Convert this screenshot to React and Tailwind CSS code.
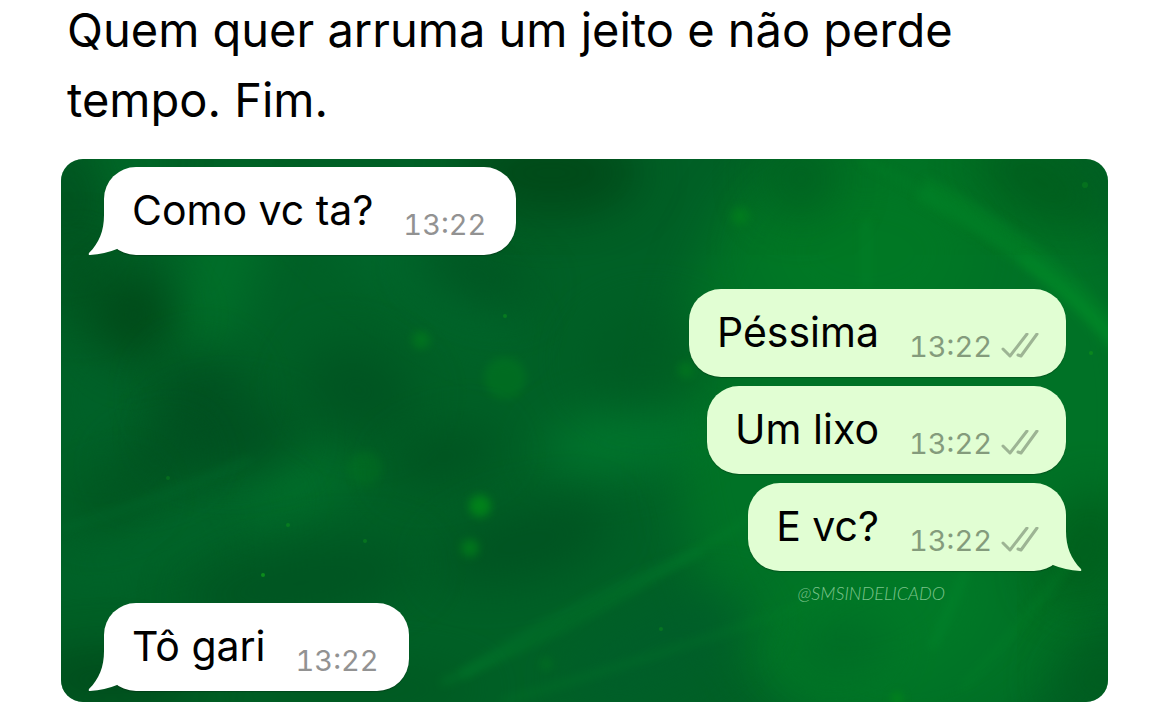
const messages = [
  { id: 1, text: 'Como vc ta?', time: '13:22', mine: false, tail: true },
  { id: 2, text: 'Péssima', time: '13:22', mine: true, tail: false },
  { id: 3, text: 'Um lixo', time: '13:22', mine: true, tail: false },
  { id: 4, text: 'E vc?', time: '13:22', mine: true, tail: true },
  { id: 5, text: 'Tô gari', time: '13:22', mine: false, tail: true },
];

// [cx, cy, rx, ry, rotation, color, opacity]
const clouds = [
  [850, 260, 240, 330, 0, '#007826', 0.75],
  [805, 94, 110, 80, 0, '#007e24', 0.5],
  [820, 461, 120, 70, -20, '#008028', 0.5],
  [159, 110, 36, 100, 20, '#00722a', 0.85],
  [66, 4, 40, 26, 0, '#00702a', 0.8],
  [234, 328, 60, 24, -25, '#00742c', 0.9],
  [561, 281, 80, 32, -10, '#00782e', 0.9],
  [350, 110, 130, 30, 35, '#006a2e', 0.7],
  [40, 240, 40, 60, 0, '#00622a', 0.7],
  [110, 378, 130, 14, -20, '#006a2e', 0.8],
  [8, 40, 30, 60, 0, '#004a1c', 0.6],
  [18, 120, 30, 40, 0, '#004e1c', 0.7],
  [72, 156, 44, 42, -40, '#004818', 0.9],
  [139, 236, 44, 42, 0, '#004e20', 0.8],
  [168, 276, 70, 34, 0, '#004e20', 0.8],
  [96, 302, 44, 24, -20, '#004e20', 0.8],
  [48, 342, 40, 20, -20, '#004e1c', 0.7],
  [297, 231, 60, 44, 20, '#005020', 0.7],
  [384, 298, 56, 24, -15, '#004e1e', 0.8],
  [463, 384, 90, 34, -15, '#005020', 0.8],
  [240, 424, 120, 36, -10, '#005020', 0.7],
  [50, 520, 90, 30, 0, '#004a1a', 0.9],
  [300, 530, 120, 24, 0, '#00541e', 0.6],
  [415, 116, 60, 26, 20, '#005020', 0.7],
  [490, 14, 90, 44, 0, '#004818', 0.9],
  [740, 20, 40, 40, 0, '#005c20', 0.7],
  [980, 24, 70, 34, 30, '#005a1c', 0.85],
  [1024, 390, 40, 60, 20, '#00581a', 0.7],
  [1040, 520, 50, 40, 0, '#005c1e', 0.7],
  [590, 200, 70, 50, 0, '#005a22', 0.6],
  [600, 490, 100, 40, -25, '#005e2a', 0.8],
  [780, 490, 50, 24, -10, '#006024', 0.6],
];

const streaks = [
  ['M380 524 Q540 460 720 338', 7, '#00802a', 0.4],
  ['M400 516 Q500 450 640 392', 10, '#007a2c', 0.4],
  ['M440 543 Q620 490 760 440', 8, '#008028', 0.25],
  ['M860 30 Q980 90 1060 186', 26, '#008628', 0.5],
  ['M960 98 Q1020 140 1060 190', 8, '#009a28', 0.4],
  ['M800 0 Q900 50 1000 128', 8, '#008028', 0.35],
  ['M905 410 Q890 450 870 490', 8, '#009030', 0.3],
  ['M1010 400 Q960 470 900 530', 8, '#008428', 0.3],
  ['M805 60 V128', 9, '#00862a', 0.4],
  ['M0 370 Q100 340 190 300', 7, '#006e30', 0.35],
];

// [cx, cy, r, opacity]
const bokeh = [
  [360, 181, 9, 0.45],
  [444, 219, 21, 0.3],
  [304, 309, 17, 0.2],
  [419, 347, 11, 0.8],
  [409, 389, 9, 0.6],
  [679, 57, 9, 0.5],
  [625, 211, 8, 0.4],
  [485, 505, 6, 0.3],
  [836, 539, 5, 1],
];

const specks = [
  [202, 416, 2, 1],
  [444, 157, 2, 0.6],
  [227, 366, 2, 0.6],
  [304, 382, 2, 0.5],
  [107, 319, 2, 0.4],
  [1030, 194, 2, 0.8],
  [600, 470, 2, 0.5],
  [1024, 26, 3, 0.4],
];

function Wallpaper() {
  return (
    <svg
      className="absolute inset-0 h-full w-full"
      viewBox="0 0 1047 543"
      preserveAspectRatio="none"
      aria-hidden="true"
    >
      <defs>
        <filter id="cloud" x="-150%" y="-150%" width="400%" height="400%" colorInterpolationFilters="sRGB">
          <feGaussianBlur stdDeviation="24" />
        </filter>
        <filter id="streak" filterUnits="userSpaceOnUse" x="-50" y="-50" width="1147" height="643" colorInterpolationFilters="sRGB">
          <feGaussianBlur stdDeviation="5" />
        </filter>
        <filter id="bokeh" x="-100%" y="-100%" width="300%" height="300%" colorInterpolationFilters="sRGB">
          <feGaussianBlur stdDeviation="4" />
        </filter>
      </defs>
      <rect width="1047" height="543" fill="#006026" />
      {clouds.map(([cx, cy, rx, ry, angle, color, opacity], i) => (
        <ellipse
          key={i}
          cx={cx}
          cy={cy}
          rx={rx}
          ry={ry}
          transform={`rotate(${angle} ${cx} ${cy})`}
          fill={color}
          opacity={opacity}
          filter="url(#cloud)"
        />
      ))}
      {streaks.map(([d, width, color, opacity], i) => (
        <path
          key={i}
          d={d}
          fill="none"
          stroke={color}
          strokeWidth={width}
          opacity={opacity}
          filter="url(#streak)"
        />
      ))}
      {bokeh.map(([cx, cy, r, opacity], i) => (
        <circle key={i} cx={cx} cy={cy} r={r} fill="#008a18" opacity={opacity} filter="url(#bokeh)" />
      ))}
      {specks.map(([cx, cy, r, opacity], i) => (
        <circle key={i} cx={cx} cy={cy} r={r} fill="#0c8c1c" opacity={opacity} />
      ))}
    </svg>
  );
}

function DoubleCheck() {
  return (
    <svg className="h-7 w-10" viewBox="0 0 40 28" fill="none" stroke="#9db494" strokeWidth="3" strokeLinecap="round" strokeLinejoin="round" aria-hidden="true">
      <path d="M3 16 L10 23 L27 1" />
      <path d="M18 22 L21 23 L37 1" />
    </svg>
  );
}

function Tail({ mine }) {
  return (
    <svg
      className={mine ? 'absolute bottom-0 -right-4 h-12 w-12 -scale-x-100' : 'absolute bottom-0 -left-4 h-12 w-12'}
      viewBox="0 0 48 48"
      fill={mine ? '#e1fed3' : '#ffffff'}
      aria-hidden="true"
    >
      <path d="M16 8 C16 24 11 36 1 46 Q0 48 2 48 Q17 47 29 42 L44 24 L44 8 Z" />
    </svg>
  );
}

function Bubble({ message }) {
  const { text, time, mine, tail } = message;

  return (
    <div
      className={
        mine
          ? 'relative mr-[42px] flex h-[88px] items-center self-end rounded-[32px] bg-[#e1fed3] pl-7 pr-[26px] shadow-[0_1px_1px_rgba(0,0,0,0.25)]'
          : 'relative ml-[43px] flex h-[88px] items-center self-start rounded-[32px] bg-white pl-7 pr-[30px] shadow-[0_1px_1px_rgba(0,0,0,0.25)]'
      }
    >
      {tail && <Tail mine={mine} />}
      <p className="relative pb-[3px] text-[41px] leading-[52px] text-black">{text}</p>
      <div className="relative flex items-center gap-2 pl-[30px] pt-7">
        <time
          className={
            mine
              ? 'text-[29px] leading-9 tabular-nums text-[#849b7c]'
              : 'text-[29px] leading-9 tabular-nums text-[#929292]'
          }
        >
          {time}
        </time>
        {mine && <DoubleCheck />}
      </div>
    </div>
  );
}

export default function App() {
  return (
    <main className="min-h-screen bg-white px-[61px] pb-5 font-['Inter',sans-serif]">
      <h1 className="-mt-[5px] pl-[6px] pb-6 text-[47px] leading-[70px] font-normal text-black">
        Quem quer arruma um jeito e não perde tempo. Fim.
      </h1>

      <section className="relative flex flex-col overflow-hidden rounded-[22px] pt-2 pb-[11px]">
        <Wallpaper />
        <Bubble message={messages[0]} />
        <div className="flex flex-col gap-[9px] pt-[34px]">
          {messages.slice(1, 4).map(message => (
            <Bubble key={message.id} message={message} />
          ))}
        </div>
        <p className="relative mr-[163px] self-end pt-3 font-['Lato',sans-serif] text-lg leading-5 font-light italic text-[#7cc48c]">
          @SMSINDELICADO
        </p>
        <Bubble message={messages[4]} />
      </section>
    </main>
  );
}
